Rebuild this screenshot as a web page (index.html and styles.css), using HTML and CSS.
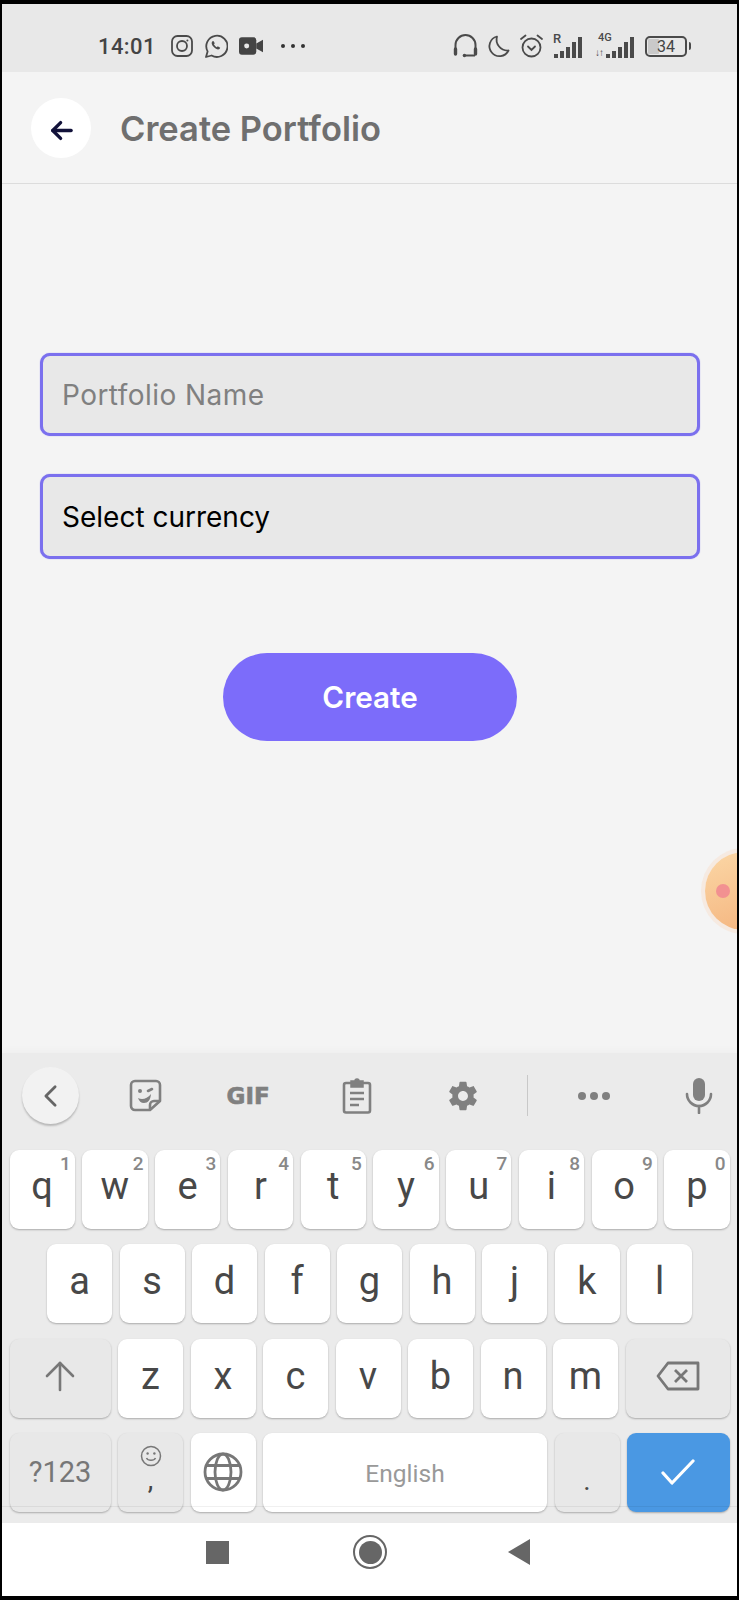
FILE: index.html
```html
<!DOCTYPE html>
<html lang="en">
<head>
  <meta charset="UTF-8" />
  <title>Create Portfolio</title>
  <link rel="stylesheet" href="styles.css">
</head>
<body>
  <div class="screen">
    <!-- Status bar -->
    <div class="status-bar">
      <span class="time">14:01</span>
      <svg class="st-insta" width="22" height="22" viewBox="0 0 22 22" fill="none" stroke="#4a4a4a" stroke-width="1.8">
        <rect x="1" y="1" width="20" height="20" rx="5.5"></rect>
        <circle cx="11" cy="11" r="5"></circle>
        <circle cx="16.4" cy="5.6" r="1" fill="#4a4a4a" stroke="none"></circle>
      </svg>
      <svg class="st-whatsapp" width="24" height="24" viewBox="0 0 24 24" fill="none" stroke="#4a4a4a" stroke-width="1.8">
        <path d="M2 23l1.6-5.6A10.6 10.6 0 1 1 7.6 21.5z" stroke-linejoin="round"></path>
        <path d="M8.4 7.2c-1.4 1.4-.8 3.6 1.4 5.9 2.2 2.2 4.6 3 5.9 1.6l.5-1-2.4-1.4-1 .9c-1-.4-2.4-1.8-2.9-2.9l.9-1-1.4-2.4z" fill="#4a4a4a" stroke="none"></path>
      </svg>
      <svg class="st-video" width="24" height="18" viewBox="0 0 25 18" fill="#444">
        <rect x="0" y="0" width="18" height="18" rx="3"></rect>
        <path d="M18 6.5L25 2.5V15.5L18 11.5z"></path>
        <circle cx="8" cy="9" r="2.6" fill="#e8e8e8"></circle>
      </svg>
      <div class="st-dots"><i></i><i></i><i></i></div>

      <svg class="st-headset" width="25" height="24" viewBox="0 0 25 24" fill="none" stroke="#4a4a4a" stroke-width="2">
        <path d="M2.5 16V11a10 10 0 0 1 20 0v5"></path>
        <path d="M2.5 15v5M22.5 15v5" stroke-width="3.4" stroke-linecap="round"></path>
        <path d="M22 21.5h-9"></path>
        <circle cx="11.5" cy="21.5" r="1.8" fill="#4a4a4a" stroke="none"></circle>
      </svg>
      <svg class="st-moon" width="23" height="23" viewBox="0 0 23 23" fill="none" stroke="#4a4a4a" stroke-width="1.8">
        <path d="M10 1.5A10 10 0 1 0 21.5 15.5 11 11 0 0 1 10 1.5z" stroke-linejoin="round"></path>
      </svg>
      <svg class="st-alarm" width="25" height="24" viewBox="0 0 25 24" fill="none" stroke="#4a4a4a" stroke-width="1.8">
        <circle cx="12.5" cy="13.5" r="9"></circle>
        <path d="M9 12.5l3.5 3.5 3.5-3.5" stroke-linecap="round"></path>
        <path d="M2 5l4.5-3.5M23 5l-4.5-3.5" stroke-linecap="round"></path>
      </svg>
      <div class="st-signal">
        <span class="sig-label sig-r">R</span>
        <svg width="28" height="21" viewBox="0 0 28 21" fill="#4a4a4a">
          <rect x="0" y="17" width="4" height="4"></rect>
          <rect x="6" y="14" width="4" height="7"></rect>
          <rect x="12" y="10" width="4" height="11"></rect>
          <rect x="18" y="5" width="4" height="16"></rect>
          <rect x="24" y="0" width="4" height="21"></rect>
        </svg>
      </div>
      <div class="st-signal st-signal-4g">
        <span class="sig-label sig-4g">4G</span>
        <span class="sig-arrows">&#8595;&#8593;</span>
        <svg width="28" height="21" viewBox="0 0 28 21" fill="#4a4a4a">
          <rect x="0" y="17" width="4" height="4"></rect>
          <rect x="6" y="14" width="4" height="7"></rect>
          <rect x="12" y="10" width="4" height="11"></rect>
          <rect x="18" y="5" width="4" height="16"></rect>
          <rect x="24" y="0" width="4" height="21"></rect>
        </svg>
      </div>
      <div class="battery"><span class="battery-level"></span><span class="battery-text">34</span></div>
      <span class="battery-tip"></span>
    </div>

    <!-- Header -->
    <div class="page-header">
      <button class="back-button">
        <svg width="25" height="21" viewBox="0 0 26 24" fill="none" stroke="#12123a" stroke-width="3.8" stroke-linecap="round" stroke-linejoin="round">
          <line x1="3" y1="12" x2="24" y2="12"></line>
          <polyline points="12,3 3,12 12,21"></polyline>
        </svg>
      </button>
      <h1>Create Portfolio</h1>
    </div>

    <!-- Form -->
    <div class="form-section">
      <div class="field field-name">Portfolio Name</div>
      <div class="field field-currency">Select currency</div>
      <button class="create-button">Create</button>
    </div>

    <div class="floating-ball"><span></span></div>

    <!-- Keyboard -->
    <div class="keyboard">
      <div class="kb-toolbar">
        <div class="kb-collapse">
          <svg width="16" height="26" viewBox="0 0 16 26" fill="none" stroke="#666" stroke-width="3" stroke-linecap="round" stroke-linejoin="round">
            <polyline points="13,3 3,13 13,23"></polyline>
          </svg>
        </div>
        <svg class="tb-sticker" width="33" height="33" viewBox="0 0 33 33" fill="none" stroke="#808080" stroke-width="2.6" stroke-linejoin="round">
          <path d="M6 2h21a4 4 0 0 1 4 4v16L21 31H6a4 4 0 0 1-4-4V6a4 4 0 0 1 4-4z"></path>
          <path d="M21 31v-5a4 4 0 0 1 4-4h6"></path>
          <circle cx="11" cy="12" r="2" fill="#808080" stroke="none"></circle>
          <path d="M19 12l4-2" stroke-linecap="round"></path>
          <path d="M9 19c4 2 9 1 13-4-.5 6-3 9-7 9-3 0-5-2-6-5z" fill="#808080" stroke="none"></path>
        </svg>
        <span class="tb-gif">GIF</span>
        <svg class="tb-clip" width="30" height="37" viewBox="0 0 30 37" fill="none" stroke="#808080" stroke-width="2.6">
          <rect x="2" y="6" width="26" height="29.5" rx="2"></rect>
          <path d="M9 4h4a2 2 0 0 1 4 0h4v6H9z" fill="#808080" stroke-width="1.5"></path>
          <path d="M8 16h14M8 22h14M8 28h9" stroke-width="2.6"></path>
        </svg>
        <svg class="tb-gear" width="34" height="34" viewBox="0 0 24 24" fill="#808080">
          <path d="M19.43 12.98c.04-.32.07-.64.07-.98s-.03-.66-.07-.98l2.11-1.65c.19-.15.24-.42.12-.64l-2-3.46c-.12-.22-.39-.3-.61-.22l-2.49 1c-.52-.4-1.08-.73-1.69-.98l-.38-2.65C14.46 2.18 14.25 2 14 2h-4c-.25 0-.46.18-.49.42l-.38 2.65c-.61.25-1.17.59-1.69.98l-2.49-1c-.23-.09-.49 0-.61.22l-2 3.46c-.13.22-.07.49.12.64l2.11 1.65c-.04.32-.07.65-.07.98s.03.66.07.98l-2.11 1.65c-.19.15-.24.42-.12.64l2 3.46c.12.22.39.3.61.22l2.49-1c.52.4 1.08.73 1.69.98l.38 2.65c.03.24.24.42.49.42h4c.25 0 .46-.18.49-.42l.38-2.65c.61-.25 1.17-.59 1.69-.98l2.49 1c.23.09.49 0 .61-.22l2-3.46c.12-.22.07-.49-.12-.64l-2.11-1.65zM12 15.5c-1.93 0-3.5-1.57-3.5-3.5s1.57-3.5 3.5-3.5 3.5 1.57 3.5 3.5-1.57 3.5-3.5 3.5z"></path>
        </svg>
        <span class="tb-divider"></span>
        <div class="tb-dots"><i></i><i></i><i></i></div>
        <svg class="tb-mic" width="28" height="36" viewBox="0 0 28 36" fill="none" stroke="#808080" stroke-width="2.6" stroke-linecap="round">
          <rect x="8" y="0" width="12" height="23" rx="6" fill="#808080" stroke="none"></rect>
          <path d="M2 16a12 12 0 0 0 24 0"></path>
          <line x1="14" y1="28" x2="14" y2="35"></line>
        </svg>
      </div>

      <div class="kb-row kb-row-top">
        <div class="key">q<sup>1</sup></div>
        <div class="key">w<sup>2</sup></div>
        <div class="key">e<sup>3</sup></div>
        <div class="key">r<sup>4</sup></div>
        <div class="key">t<sup>5</sup></div>
        <div class="key">y<sup>6</sup></div>
        <div class="key">u<sup>7</sup></div>
        <div class="key">i<sup>8</sup></div>
        <div class="key">o<sup>9</sup></div>
        <div class="key">p<sup>0</sup></div>
      </div>
      <div class="kb-row kb-row-home">
        <div class="key">a</div>
        <div class="key">s</div>
        <div class="key">d</div>
        <div class="key">f</div>
        <div class="key">g</div>
        <div class="key">h</div>
        <div class="key">j</div>
        <div class="key">k</div>
        <div class="key">l</div>
      </div>
      <div class="kb-row kb-row-bottom">
        <div class="key key-wide key-fn">
          <svg width="30" height="32" viewBox="0 0 30 32" fill="none" stroke="#777" stroke-width="2.6" stroke-linecap="round" stroke-linejoin="round">
            <line x1="15" y1="3" x2="15" y2="30"></line>
            <polyline points="2,16 15,3 28,16"></polyline>
          </svg>
        </div>
        <div class="key">z</div>
        <div class="key">x</div>
        <div class="key">c</div>
        <div class="key">v</div>
        <div class="key">b</div>
        <div class="key">n</div>
        <div class="key">m</div>
        <div class="key key-wide key-last key-fn">
          <svg width="44" height="30" viewBox="0 0 44 30" fill="none" stroke="#777" stroke-width="2.8" stroke-linejoin="round">
            <path d="M12 2h30v26H12L2 15z"></path>
            <path d="M19 9l12 12M31 9L19 21" stroke-width="2.8"></path>
          </svg>
        </div>
      </div>
      <div class="kb-row">
        <div class="key key-wide key-fn key-label">?123</div>
        <div class="key key-fn key-emoji">
          <svg width="22" height="22" viewBox="0 0 22 22" fill="none" stroke="#777" stroke-width="1.5">
            <circle cx="11" cy="11" r="9.5"></circle>
            <circle cx="7.6" cy="8.5" r="1.2" fill="#777" stroke="none"></circle>
            <circle cx="14.4" cy="8.5" r="1.2" fill="#777" stroke="none"></circle>
            <path d="M6.5 13c1.5 3 7.5 3 9 0"></path>
          </svg>
          <span class="emoji-comma">,</span>
        </div>
        <div class="key">
          <svg width="40" height="40" viewBox="0 0 40 40" fill="none" stroke="#777" stroke-width="2.8">
            <circle cx="20" cy="20" r="18"></circle>
            <ellipse cx="20" cy="20" rx="8" ry="18"></ellipse>
            <path d="M3.5 13.5h33M3.5 26.5h33"></path>
          </svg>
        </div>
        <div class="key key-space">English</div>
        <div class="key key-fn key-period">.</div>
        <div class="key key-wide key-last key-enter">
          <svg width="34" height="26" viewBox="0 0 34 26" fill="none" stroke="#fff" stroke-width="3.2" stroke-linecap="round" stroke-linejoin="round">
            <polyline points="2,14 11,24 32,2"></polyline>
          </svg>
        </div>
      </div>
      <span class="kb-nav-line"></span>
    </div>

    <!-- Navigation bar -->
    <div class="nav-bar">
      <span class="nav-square"></span>
      <span class="nav-circle"><i></i></span>
      <span class="nav-triangle"></span>
    </div>
  </div>
</body>
</html>
```

FILE: styles.css
```css
* {
  margin: 0;
  padding: 0;
  box-sizing: border-box;
}

body {
  width: 739px;
  height: 1600px;
  overflow: hidden;
  background: #000;
  font-family: Inter, "Noto Sans", sans-serif;
}

.screen {
  position: relative;
  width: 739px;
  height: 1600px;
  border-style: solid;
  border-color: #000;
  border-width: 4px 2px 4px 2px;
  background: #f4f4f4;
  display: flex;
  flex-direction: column;
  overflow: hidden;
}

/* Status bar */
.status-bar {
  height: 68px;
  flex-shrink: 0;
  background: #e8e8e8;
  display: flex;
  align-items: center;
  padding: 30px 0 14px 96px;
}

.time {
  font-family: Roboto, sans-serif;
  font-size: 22px;
  font-weight: 500;
  color: #444;
  width: 58px;
  letter-spacing: 0.4px;
}

.st-insta { margin-left: 15px; }
.st-whatsapp { margin-left: 11px; }
.st-video { margin-left: 11px; }

.st-dots {
  display: flex;
  gap: 6px;
  margin-left: 18px;
}

.st-dots i {
  width: 4px;
  height: 4px;
  border-radius: 50%;
  background: #333;
}

.st-headset { margin-left: 148px; }
.st-moon { margin-left: 9px; }
.st-alarm { margin-left: 9px; }

.st-signal {
  position: relative;
  margin-left: 9px;
  width: 29px;
  height: 24px;
  display: flex;
  align-items: flex-end;
  justify-content: flex-end;
}

.st-signal-4g {
  margin-left: 13px;
  width: 39px;
}

.sig-label {
  position: absolute;
  left: 0;
  top: -3px;
  font-family: Roboto, sans-serif;
  font-weight: 500;
  color: #4a4a4a;
}

.sig-r { font-size: 13px; }

.sig-4g {
  font-size: 11px;
  left: 3px;
}

.sig-arrows {
  position: absolute;
  left: 0;
  bottom: 0;
  font-family: Roboto, sans-serif;
  font-size: 10px;
  letter-spacing: -1px;
  color: #4a4a4a;
}

.battery {
  position: relative;
  margin-left: 11px;
  width: 42px;
  height: 21px;
  border: 2.5px solid #4a4a4a;
  border-radius: 5px;
  font-family: Roboto, sans-serif;
  display: flex;
  align-items: center;
  justify-content: center;
}

.battery-level {
  position: absolute;
  left: 1px;
  top: 1px;
  bottom: 1px;
  width: 11px;
  background: #c9c9c9;
  border-radius: 1px;
}

.battery-text {
  position: relative;
  font-size: 16px;
  color: #444;
}

.battery-tip {
  width: 2px;
  height: 8px;
  margin-left: 2px;
  background: #4a4a4a;
  border-radius: 0 2px 2px 0;
}

/* Page header */
.page-header {
  height: 112px;
  flex-shrink: 0;
  display: flex;
  align-items: center;
  padding-left: 29px;
  border-bottom: 1px solid #dcdcdc;
}

.back-button {
  width: 60px;
  height: 60px;
  border: none;
  border-radius: 50%;
  background: #fff;
  display: flex;
  align-items: center;
  justify-content: center;
  padding-top: 5px;
}

.page-header h1 {
  margin: 1px 0 0 29px;
  font-size: 34.5px;
  font-weight: 600;
  color: #6f6f6f;
}

/* Form */
.form-section {
  flex: 1;
  display: flex;
  flex-direction: column;
  align-items: center;
  padding: 169px 37px 0 38px;
}

.field {
  width: 100%;
  display: flex;
  align-items: center;
  padding: 1px 0 0 19px;
  background: #e8e8e8;
  border: 3px solid #7b70ee;
  border-radius: 10px;
  box-shadow: 0 0 1px #7b70ee;
  font-size: 28px;
  color: #000;
}

.field-name {
  height: 83px;
  color: #808080;
  letter-spacing: 0.45px;
}

.field-currency {
  height: 85px;
  margin-top: 38px;
}

.create-button {
  width: 294px;
  height: 88px;
  margin-top: 94px;
  border: none;
  border-radius: 44px;
  background: #7c6cfa;
  color: #fff;
  font-family: Inter, sans-serif;
  font-size: 29.6px;
  font-weight: 600;
}

.floating-ball {
  position: absolute;
  left: 703px;
  top: 848px;
  width: 78px;
  height: 78px;
  border-radius: 50%;
  background: linear-gradient(160deg, #fbd7a6, #f4b27c);
  box-shadow: 0 0 0 4px rgba(248, 215, 190, 0.35);
}

.floating-ball span {
  position: absolute;
  left: 11px;
  top: 32px;
  width: 14px;
  height: 14px;
  border-radius: 50%;
  background: #f29191;
}

/* Keyboard */
.keyboard {
  position: relative;
  height: 470px;
  flex-shrink: 0;
  background: #ebebeb;
  box-shadow: 0 -4px 6px rgba(0, 0, 0, 0.02);
  padding: 0 7.5px;
}

.kb-toolbar {
  height: 97px;
  display: flex;
  align-items: center;
  padding-bottom: 12px;
}

.kb-collapse {
  width: 57px;
  height: 57px;
  margin-left: 12px;
  border-radius: 50%;
  background: #f2f2f2;
  box-shadow: 0 2px 2px rgba(0, 0, 0, 0.22);
  display: flex;
  align-items: center;
  justify-content: center;
}

.kb-collapse svg {
  width: 15px;
  height: 24px;
}

.tb-sticker { margin-left: 50px; }

.tb-gif {
  margin-left: 65px;
  width: 44px;
  font-family: "DejaVu Sans", sans-serif;
  font-size: 23px;
  font-weight: 700;
  color: #808080;
  -webkit-text-stroke: 0.6px #808080;
  white-space: nowrap;
}

.tb-clip { margin-left: 71px; }
.tb-gear { margin-left: 74px; }

.tb-divider {
  width: 1px;
  height: 41px;
  margin-left: 47px;
  background: #c8c8c8;
}

.tb-dots {
  display: flex;
  gap: 4px;
  margin-left: 50px;
}

.tb-dots i {
  width: 8px;
  height: 8px;
  border-radius: 50%;
  background: #808080;
}

.tb-mic { margin-left: 75px; }

.kb-row {
  display: flex;
  gap: 7.5px;
  height: 79px;
  margin-bottom: 15.3px;
}

.kb-row-top .key {
  flex: 1;
  padding-bottom: 8px;
}

.kb-row-home {
  padding-left: 37.5px;
}

.kb-row-home .key {
  padding-bottom: 6px;
}

.kb-row-bottom .key {
  padding-bottom: 4px;
}

.key {
  position: relative;
  width: 65px;
  flex-shrink: 0;
  background: #fff;
  border-radius: 9px;
  box-shadow: 0 1px 2px rgba(0, 0, 0, 0.28);
  display: flex;
  align-items: center;
  justify-content: center;
  font-family: Roboto, sans-serif;
  font-size: 38px;
  color: #484848;
}

.key sup {
  position: absolute;
  top: 4px;
  right: 4px;
  font-size: 19px;
  font-weight: 500;
  line-height: 1;
  color: #888;
}

.key-wide {
  width: 101px;
}

.key-last {
  flex: 1;
}

.key-fn {
  background: #e8e8e8;
}

.key-label {
  font-size: 29px;
  color: #777;
}

.key-emoji {
  flex-direction: column;
  justify-content: flex-start;
  padding-top: 12px;
}

.emoji-comma {
  font-size: 28px;
  line-height: 26px;
  color: #444;
}

.key-space {
  width: 284px;
  font-size: 24.5px;
  color: #999;
  padding-top: 2px;
}

.key-period {
  font-size: 28px;
  padding-top: 16px;
}

.key-enter {
  background: #4a98e3;
}

.kb-nav-line {
  position: absolute;
  left: 0;
  right: 0;
  bottom: 16px;
  height: 1px;
  background: rgba(0, 0, 0, 0.06);
}

/* Navigation bar */
.nav-bar {
  height: 73px;
  flex-shrink: 0;
  background: #fff;
  display: flex;
  align-items: center;
  padding: 0 0 15px 204px;
}

.nav-square {
  width: 23px;
  height: 23px;
  background: #666;
}

.nav-circle {
  width: 34px;
  height: 34px;
  margin-left: 124px;
  border: 2px solid #666;
  border-radius: 50%;
  display: flex;
  align-items: center;
  justify-content: center;
}

.nav-circle i {
  width: 23px;
  height: 23px;
  border-radius: 50%;
  background: #666;
}

.nav-triangle {
  margin-left: 121px;
  border-style: solid;
  border-width: 13px 22px 13px 0;
  border-color: transparent #666 transparent transparent;
}
```
